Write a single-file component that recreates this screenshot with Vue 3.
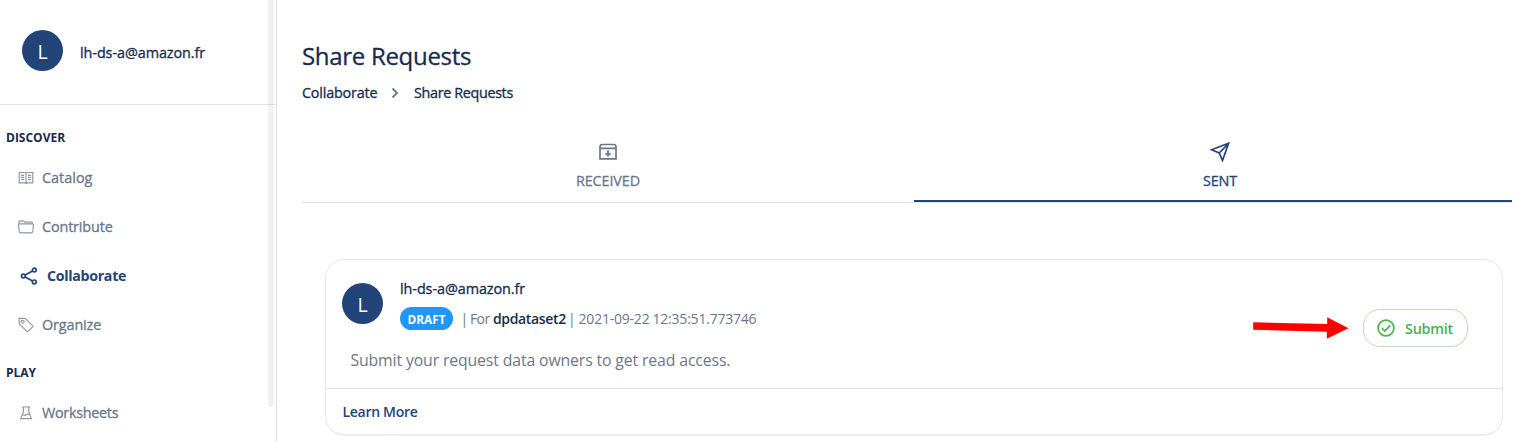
<script setup>
const sections = [
  {
    title: 'Discover',
    items: [
      { label: 'Catalog', icon: 'book', track: 0.02 },
      { label: 'Contribute', icon: 'folder', track: -0.14 },
      { label: 'Collaborate', icon: 'share', track: -0.3, active: true },
      { label: 'Organize', icon: 'tag', track: -0.12 },
    ],
  },
  { title: 'Play', items: [{ label: 'Worksheets', icon: 'flask', track: -0.3 }] },
]
</script>

<template>
  <div class="app">
    <aside class="sidebar">
      <div class="profile">
        <div class="avatar">L</div>
        <span class="email">lh-ds-a@amazon.fr</span>
      </div>
      <nav>
        <section v-for="s in sections" :key="s.title" class="group">
          <h2>{{ s.title }}</h2>
          <a v-for="i in s.items" :key="i.label" class="item" :class="{ active: i.active }">
            <svg v-if="i.icon === 'book'" class="ico" viewBox="0 0 16 16">
              <path d="M1.200 2.500h5.600L8 3.200l1.200-.7h5.600v10.300H9.200L8 13.500l-1.200-.7H1.200zM8 3.200v10.300M3 5.300h3M3 7.400h3M3 9.500h3M10 5.300h3M10 7.400h3M10 9.500h3" />
            </svg>
            <svg v-else-if="i.icon === 'folder'" class="ico" viewBox="0 0 16 16">
              <path d="M.9 5V3.100q0-1.300 1.300-1.300h2.900q.5 0 .9.400l.8.900h6.400q1.300 0 1.300 1.300V5M1.800 4.900h12.400q1.300 0 1.200 1.300l-.6 6.300q-.1 1.300-1.400 1.300H2.600q-1.300 0-1.400-1.300L.6 6.200q-.1-1.300 1.200-1.300z" />
            </svg>
            <svg v-else-if="i.icon === 'share'" class="ico" viewBox="0 0 18 18">
              <circle cx="3.400" cy="9" r="1.900" /><circle cx="14.300" cy="3.100" r="1.900" /><circle cx="14.300" cy="14.900" r="1.900" />
              <path d="M5.200 8l7.300-3.900M5.200 10l7.300 3.900" />
            </svg>
            <svg v-else-if="i.icon === 'tag'" class="ico" viewBox="0 0 16 16">
              <path d="M1 1.300h5.600q.5 0 .9.400l7.100 6.900q.6.600 0 1.200L10 14.400q-.6.600-1.200 0L1.900 7.600q-.4-.4-.5-1z" />
              <circle cx="4.700" cy="4.700" r="1.500" />
            </svg>
            <svg v-else class="ico" viewBox="0 0 16 16">
              <path d="M4 2h8M5.300 2v5.200L2.700 13.600h10.800l-2.700-6.400V2M4.500 9.600q2 1.300 3.700.2t3.300-.5" />
            </svg>
            <span :style="{ letterSpacing: i.track + 'px' }">{{ i.label }}</span>
          </a>
        </section>
      </nav>
      <div class="scrollbar"></div>
    </aside>

    <main class="main">
      <h1>Share Requests</h1>
      <div class="crumbs">
        <span class="crumb-a">Collaborate</span>
        <svg class="chev" viewBox="0 0 10 12"><path d="M2.500 1.500L7 6l-4.500 4.500" /></svg>
        <span class="crumb-b">Share Requests</span>
      </div>

      <div class="tabs">
        <div class="tab">
          <svg class="tab-ico" viewBox="0 0 20 20">
            <path d="M2 5.300q0-2.800 2-2.800h12q2 0 2 2.800V16.800H2zM2 6.400h16M10 8.300v5M7.600 11.200l2.400 2.400 2.400-2.400" />
          </svg>
          <span>RECEIVED</span>
        </div>
        <div class="tab on">
          <svg class="tab-ico" viewBox="0 0 20 20">
            <path d="M18.600 1.300L1.500 7.800l7.700 3.200 3.300 7.500zM18.600 1.300L9.200 11" />
          </svg>
          <span>SENT</span>
        </div>
      </div>

      <article class="card">
        <div class="body">
          <div class="head">
            <div class="avatar">L</div>
            <div class="info">
              <div class="email">lh-ds-a@amazon.fr</div>
              <div class="meta">
                <span class="badge">DRAFT</span>
                <span class="for">| For</span>
                <b>dpdataset2</b>
                <span class="date">| 2021-09-22 12:35:51.773746</span>
              </div>
            </div>
          </div>
          <p>Submit your request data owners to get read access.</p>
          <div class="action">
            <svg class="arrow" viewBox="0 0 96 22">
              <path d="M.2 5.300L74.200 7V.2L95.500 11.300 73.800 21.700V14.800L.2 12.800z" />
            </svg>
            <button type="button">
              <svg viewBox="0 0 20 20"><circle cx="10" cy="10" r="7.900" /><path d="M5.800 10.200l2.900 2.900 5.600-5.800" /></svg>
              <span>Submit</span>
            </button>
          </div>
        </div>
        <footer><a>Learn More</a></footer>
      </article>
    </main>
  </div>
</template>

<style>
body { margin: 0; background: #fff; overflow: hidden; }
</style>

<style scoped>
* { box-sizing: border-box; }
.app { display: flex; width: 1515px; height: 441px; overflow: hidden; font-family: "Open Sans", "Noto Sans", sans-serif; color: #172b4d; background: #fff; }
svg { fill: none; stroke: currentColor; flex: none; display: block; }
.email, .item span, h1, .crumbs span, .tab span { -webkit-text-stroke: .3px currentColor; }
.sidebar { position: relative; width: 277px; height: 441px; border-right: 1px solid #dedede; flex: none; }
.scrollbar { position: absolute; left: 268px; top: 0; width: 6px; height: 407px; background: rgba(0, 0, 0, .055); border-radius: 0 0 3px 3px; }
.profile { display: flex; align-items: center; gap: 17px; height: 105px; padding: 0 0 3px 22px; border-bottom: 1px solid #e3e3e3; }
.avatar { width: 41px; height: 41px; border-radius: 50%; background: #234478; color: #fff; font-size: 19.500px; line-height: 43px; text-align: center; flex: none; }
.email { font-size: 14.400px; font-weight: 500; line-height: 20px; letter-spacing: -.07px; white-space: nowrap; }
.profile .email { padding-top: 4px; }
.group { padding-top: 17px; height: 235.500px; }
.group h2 { margin: 0; padding-left: 6px; height: 31px; font-size: 12px; font-weight: 700; line-height: 31px; text-transform: uppercase; }
.group + .group h2 { line-height: 30px; }
.item { display: flex; align-items: center; height: 49.100px; padding-left: 18px; gap: 8px; font-size: 14.400px; font-weight: 500; color: #6b778c; line-height: 20px; }
.ico { width: 16px; height: 16px; stroke-width: 1.150; }
.item .ico { color: #8b95a7; }
.item.active { padding-left: 20px; gap: 9px; font-size: 14.200px; font-weight: 700; color: #234478; }
.item.active span { -webkit-text-stroke: 0; }
.item.active .ico { width: 18px; height: 18px; color: #234478; stroke-width: 1.700; }

.main { width: 1238px; padding: 40px 3px 0 25px; }
h1 { margin: 0; font-size: 24px; font-weight: 500; line-height: 31px; letter-spacing: -.3px; }
.crumbs { display: flex; align-items: center; margin-top: 12px; height: 20px; font-size: 14.400px; font-weight: 500; line-height: 20px; }
.crumb-a { width: 75px; letter-spacing: -.2px; white-space: nowrap; }
.crumb-b { letter-spacing: -.36px; }
.chev { width: 10px; height: 12px; margin: -1px 14px 0 13px; color: #6b778c; stroke-width: 1.800; }
.tabs { display: flex; height: 100px; border-bottom: 1px solid #e2e2e2; overflow: hidden; }
.tab { width: 612px; flex: none; display: flex; flex-direction: column; align-items: center; padding-top: 39px; font-size: 14.400px; font-weight: 500; line-height: 20px; color: #6b778c; }
.tab span { letter-spacing: -.1px; }
.tab.on { color: #234478; border-bottom: 2px solid #234478; }
.tab-ico { width: 20px; height: 20px; margin-bottom: 8.500px; stroke-width: 1.700; }

.card { margin: 56px 9px 0 23px; height: 176px; border: 1px solid #e8e8e8; border-radius: 19px; box-shadow: 0 1px 1px rgba(0, 0, 0, .06); }
.body { position: relative; height: 129px; border-bottom: 1px solid #e0e0e0; padding: 19px 16px 0; }
.head { display: flex; gap: 17px; }
.head .avatar { margin-top: 3.500px; }
.meta { display: flex; align-items: center; margin-top: 8px; height: 23px; font-size: 14px; line-height: 25px; color: #6b778c; white-space: nowrap; }
.badge { width: 53px; height: 23px; border-radius: 12px; background: #2196f3; color: #fff; font-size: 11.800px; font-weight: 700; line-height: 24px; text-align: center; }
.for { width: 32.500px; margin-left: 7.500px; letter-spacing: -.55px; word-spacing: -.8px; }
.meta b { width: 75px; font-weight: 600; letter-spacing: -.35px; color: #172b4d; }
.date { letter-spacing: -.22px; word-spacing: -.3px; }
.body p { margin: 18px 0 0 8.500px; font-size: 15.800px; line-height: 24px; letter-spacing: -.13px; color: #6b778c; }
.action { position: absolute; right: 34px; top: 49px; display: flex; align-items: center; gap: 14px; }
.arrow { width: 96px; height: 22px; fill: #fe0000; stroke: none; }
button { display: flex; align-items: center; gap: 8px; width: 105px; height: 38px; padding: 0 0 0 12px; border: 1px solid #b7dfb9; border-radius: 17px; background: #fff; color: #4caf50; font: 600 14.400px/20px "Open Sans", sans-serif; letter-spacing: -.25px; }
button span { padding: 1px 0 0 1px; }
button svg { width: 20px; height: 20px; stroke-width: 1.700; }
footer { padding: 13px 0 0 16.500px; font-size: 14px; font-weight: 600; line-height: 20px; letter-spacing: -.3px; color: #234478; }
</style>
